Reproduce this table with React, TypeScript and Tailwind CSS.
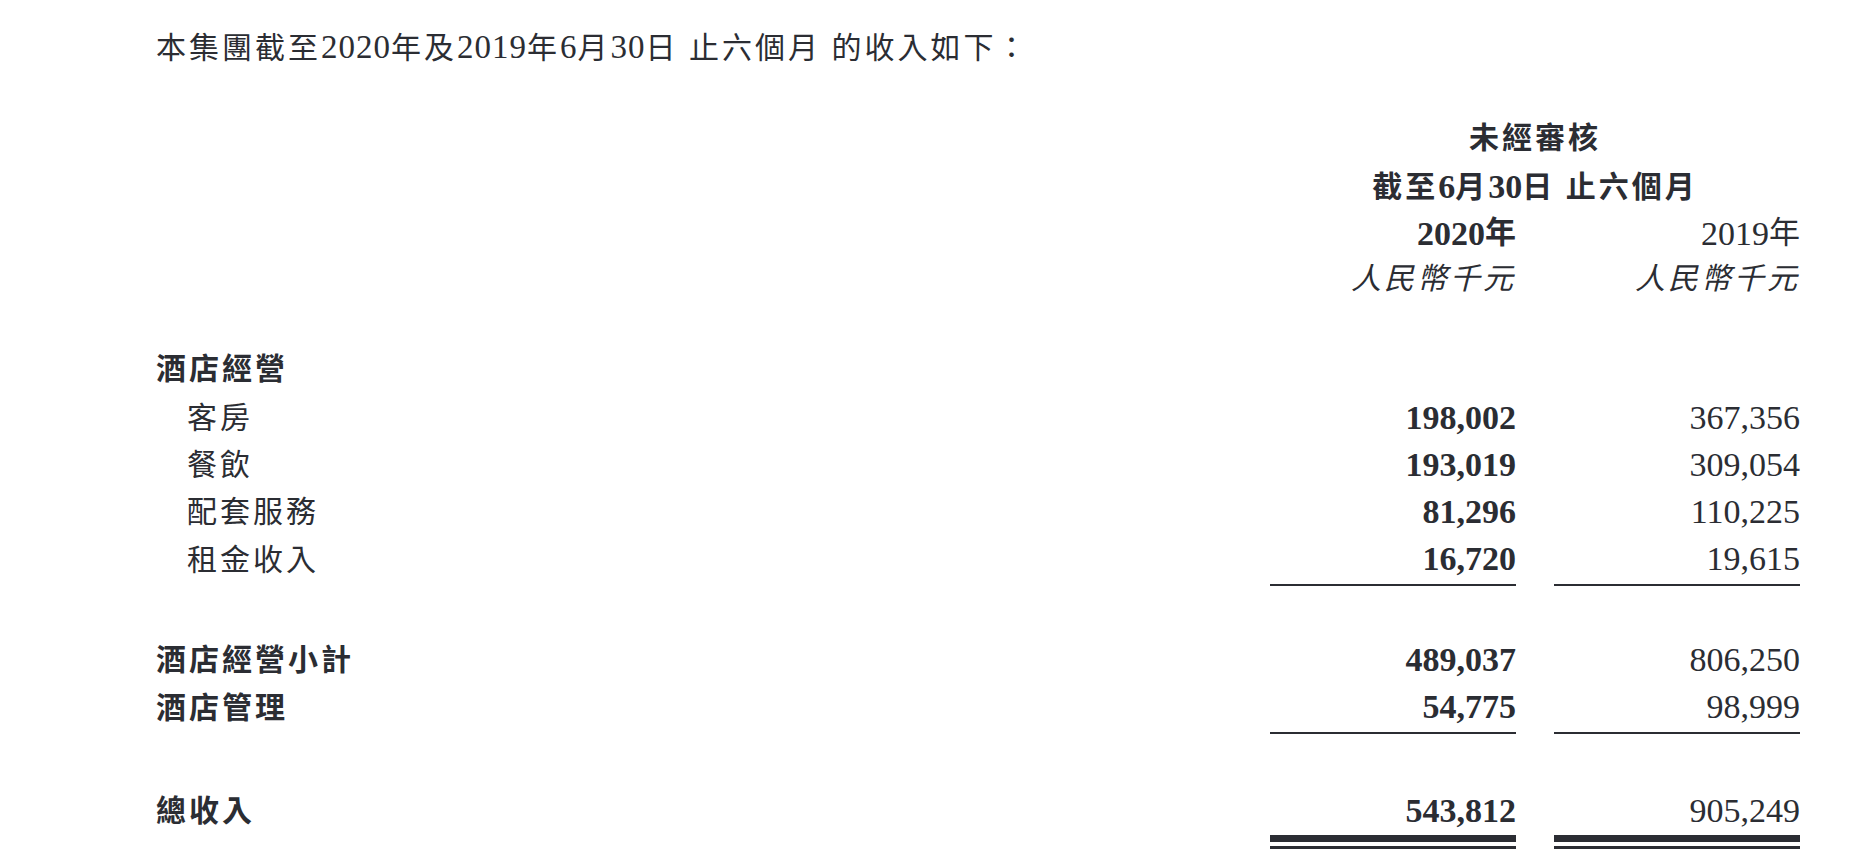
import React from "react";

type RowProps = {
  label?: React.ReactNode;
  a?: string;
  b?: string;
  bold?: boolean;
  indent?: boolean;
  line?: boolean;
};

function Row({ label, a, b, bold, indent, line }: RowProps) {
  return (
    <div className="grid grid-cols-[1fr_246px_246px] gap-x-[38px] h-[47px]">
      <div
        className={`flex items-center text-[30px] tracking-[3px] ${indent ? "pl-[31px]" : ""} ${bold ? "font-bold" : "font-normal"}`}
      >
        {label}
      </div>
      <div
        className={`flex items-center justify-end font-bold text-[34px] ${line ? "border-b-2 border-[#2b2d33]" : ""}`}
      >
        {a}
      </div>
      <div
        className={`flex items-center justify-end text-[34px] ${line ? "border-b-2 border-[#2b2d33]" : ""}`}
      >
        {b}
      </div>
    </div>
  );
}

export default function App() {
  return (
    <div className="w-[1876px] h-[864px] bg-white text-[#2b2d33] font-['Liberation_Serif','Noto_Sans_CJK_TC',serif] pl-[156px] pr-[76px] pt-[24px] overflow-hidden">
      <div className="h-[47px] flex items-center text-[30px] tracking-[3px]">
        本集團截至<span className="text-[33px] tracking-[1px]">2020</span>年及<span className="text-[33px] tracking-[1px]">2019</span>年<span className="text-[33px] tracking-[1px]">6</span>月<span className="text-[33px] tracking-[1px]">30</span>日 止六個月 的收入如下：
      </div>

      <div className="mt-[43px]">
        <div className="grid grid-cols-[1fr_246px_246px] gap-x-[38px] h-[47px]">
          <div />
          <div className="col-span-2 flex items-center justify-center font-bold text-[30px] tracking-[3px]">
            未經審核
          </div>
        </div>
        <div className="grid grid-cols-[1fr_246px_246px] gap-x-[38px] h-[47px]">
          <div />
          <div className="col-span-2 flex items-center justify-center font-bold text-[30px] tracking-[3px]">
            截至<span className="text-[34px] tracking-normal">6</span>月<span className="text-[34px] tracking-normal">30</span>日 止六個月
          </div>
        </div>
        <div className="grid grid-cols-[1fr_246px_246px] gap-x-[38px] h-[47px]">
          <div />
          <div className="flex items-center justify-end font-bold text-[34px]">
            2020<span className="text-[31px]">年</span>
          </div>
          <div className="flex items-center justify-end text-[34px]">
            2019<span className="text-[31px]">年</span>
          </div>
        </div>
        <div className="grid grid-cols-[1fr_246px_246px] gap-x-[38px] h-[47px]">
          <div />
          <div className="flex items-center justify-end italic text-[30px] tracking-[3px]">
            人民幣千元
          </div>
          <div className="flex items-center justify-end italic text-[30px] tracking-[3px]">
            人民幣千元
          </div>
        </div>
      </div>

      <div className="h-[43px]" />

      <Row label="酒店經營" bold />
      <Row label="客房" indent a="198,002" b="367,356" />
      <Row label="餐飲" indent a="193,019" b="309,054" />
      <Row label="配套服務" indent a="81,296" b="110,225" />
      <Row label="租金收入" indent a="16,720" b="19,615" line />

      <div className="h-[54px]" />

      <Row label="酒店經營小計" bold a="489,037" b="806,250" />
      <Row label="酒店管理" bold a="54,775" b="98,999" line />

      <div className="h-[57px]" />

      <Row label="總收入" bold a="543,812" b="905,249" />
      <div className="grid grid-cols-[1fr_246px_246px] gap-x-[38px]">
        <div />
        <div className="flex flex-col">
          <div className="mt-[3px] h-[7px] bg-[#2b2d33]" />
          <div className="mt-[4px] h-[3px] bg-[#2b2d33]" />
        </div>
        <div className="flex flex-col">
          <div className="mt-[3px] h-[7px] bg-[#2b2d33]" />
          <div className="mt-[4px] h-[3px] bg-[#2b2d33]" />
        </div>
      </div>
    </div>
  );
}
